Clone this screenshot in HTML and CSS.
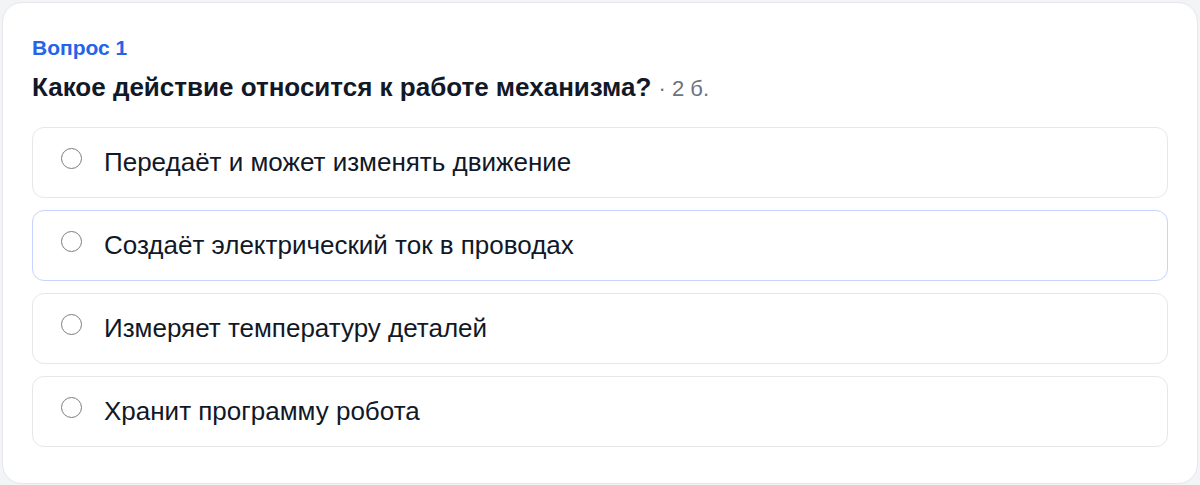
FILE: index.html
```html
<!DOCTYPE html>
<html lang="ru">
<head>
	<meta charset="UTF-8">
	<title>Вопрос 1</title>
	<link rel="stylesheet" href="styles.css">
</head>
<body>
	<div class="question">
		<div class="q-num">Вопрос 1</div>
		<div class="q-title">Какое действие относится к работе механизма? <span class="q-points">· 2 б.</span></div>
		<div class="answers">
			<label class="answer"><input type="radio" name="q1"><span>Передаёт и может изменять движение</span></label>
			<label class="answer hover"><input type="radio" name="q1"><span>Создаёт электрический ток в проводах</span></label>
			<label class="answer"><input type="radio" name="q1"><span>Измеряет температуру деталей</span></label>
			<label class="answer"><input type="radio" name="q1"><span>Хранит программу робота</span></label>
		</div>
	</div>
</body>
</html>
```

FILE: styles.css
```css
*{
	padding:0;
	margin:0;
	box-sizing: border-box;
}
body{
	background:#f3f4f6;
	padding:2px 2px 0 2px;
	font-family: "Liberation Sans", Arial, sans-serif;
	color:#111827;
}
.question{
	background:#fff;
	border:1px solid #e5e7eb;
	border-radius:20px;
	padding:33px 29px 0 29px;
	height:482px;
}
.q-num{
	color:#2563eb;
	font-size:21px;
	font-weight:bold;
	line-height:24px;
}
.q-title{
	font-size:26px;
	font-weight:bold;
	line-height:32px;
	margin-top:11px;
}
.q-points{
	font-size:22px;
	font-weight:normal;
	color:#6b7280;
}
.answers{
	display:flex;
	flex-direction:column;
	gap:12px;
	margin-top:22px;
}
.answer{
	display:flex;
	align-items:center;
	gap:22px;
	height:71px;
	padding:0 28px;
	border:1px solid #e5e7eb;
	border-radius:12px;
	font-size:26px;
	cursor:pointer;
}
.answer.hover{
	border-color:#c7d2fe;
}
.answer input{
	appearance:none;
	width:21px;
	height:21px;
	border:1.5px solid #7d7d7d;
	border-radius:50%;
	background:#fff;
	margin:0;
	margin-top:-9px;
	flex:none;
}
.answer input:checked{
	border:6px solid #2563eb;
}
```
